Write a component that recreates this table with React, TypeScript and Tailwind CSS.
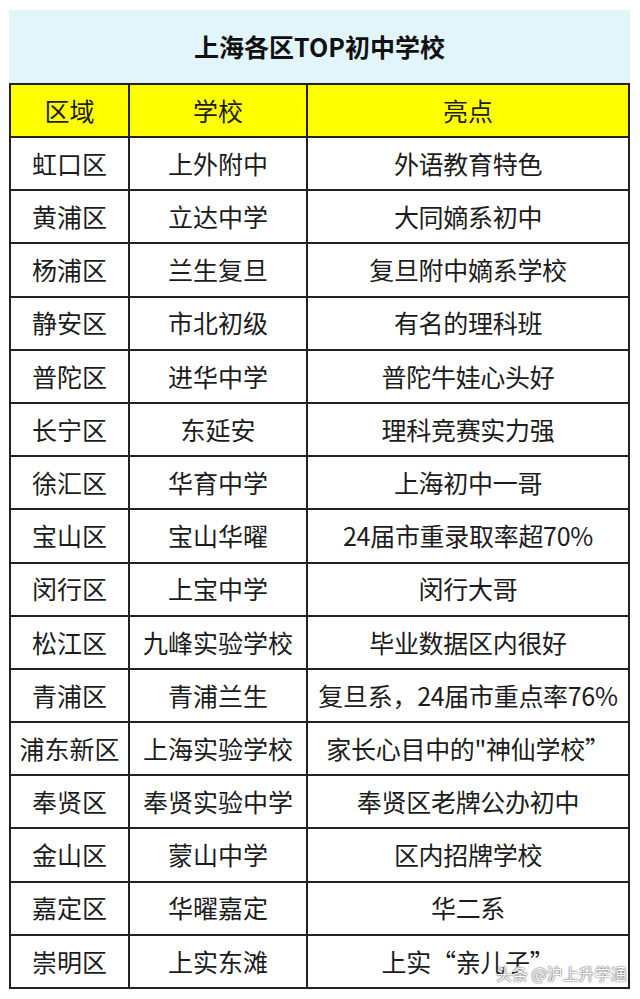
import React from 'react';

const rows: [string, string, string][] = [
  ['虹口区', '上外附中', '外语教育特色'],
  ['黄浦区', '立达中学', '大同嫡系初中'],
  ['杨浦区', '兰生复旦', '复旦附中嫡系学校'],
  ['静安区', '市北初级', '有名的理科班'],
  ['普陀区', '进华中学', '普陀牛娃心头好'],
  ['长宁区', '东延安', '理科竞赛实力强'],
  ['徐汇区', '华育中学', '上海初中一哥'],
  ['宝山区', '宝山华曜', '24届市重录取率超70%'],
  ['闵行区', '上宝中学', '闵行大哥'],
  ['松江区', '九峰实验学校', '毕业数据区内很好'],
  ['青浦区', '青浦兰生', '复旦系，24届市重点率76%'],
  ['浦东新区', '上海实验学校', '家长心目中的"神仙学校”'],
  ['奉贤区', '奉贤实验中学', '奉贤区老牌公办初中'],
  ['金山区', '蒙山中学', '区内招牌学校'],
  ['嘉定区', '华曜嘉定', '华二系'],
  ['崇明区', '上实东滩', '上实“亲儿子”'],
];

const font = { fontFamily: '"Noto Sans CJK SC", "Noto Sans", sans-serif' };

export default function App() {
  return (
    <div className="relative w-[640px] h-[999px] bg-white pt-[10px] pl-[9px]" style={font}>
      <div className="w-[621px] h-[73px] bg-[#e2f5fb] flex items-center justify-center text-[25px] font-bold text-[#111]">
        上海各区TOP初中学校
      </div>
      <table className="border-collapse table-fixed w-[621px] text-[25px] text-[#1c1c1c]">
        <colgroup>
          <col className="w-[119px]" />
          <col className="w-[178px]" />
          <col />
        </colgroup>
        <thead>
          <tr className="h-[53px] bg-[#ffff00]">
            <th className="border-2 border-[#222] font-normal text-center p-0">区域</th>
            <th className="border-2 border-[#222] font-normal text-center p-0">学校</th>
            <th className="border-2 border-[#222] font-normal text-center p-0">亮点</th>
          </tr>
        </thead>
        <tbody>
          {rows.map(([area, school, note]) => (
            <tr key={area} className="h-[53.2px]">
              <td className="border-2 border-[#222] text-center p-0 whitespace-nowrap">{area}</td>
              <td className="border-2 border-[#222] text-center p-0 whitespace-nowrap">{school}</td>
              <td className="border-2 border-[#222] text-center p-0 whitespace-nowrap tracking-[-0.3px]">{note}</td>
            </tr>
          ))}
        </tbody>
      </table>

      {/* watermark */}
      <div
        className="absolute left-[496px] top-[961px] text-[16px] text-white"
        style={{ textShadow: '0 0 2px #555, 0 0 1px #555' }}
      >
        头条 @沪上升学通
      </div>
    </div>
  );
}
